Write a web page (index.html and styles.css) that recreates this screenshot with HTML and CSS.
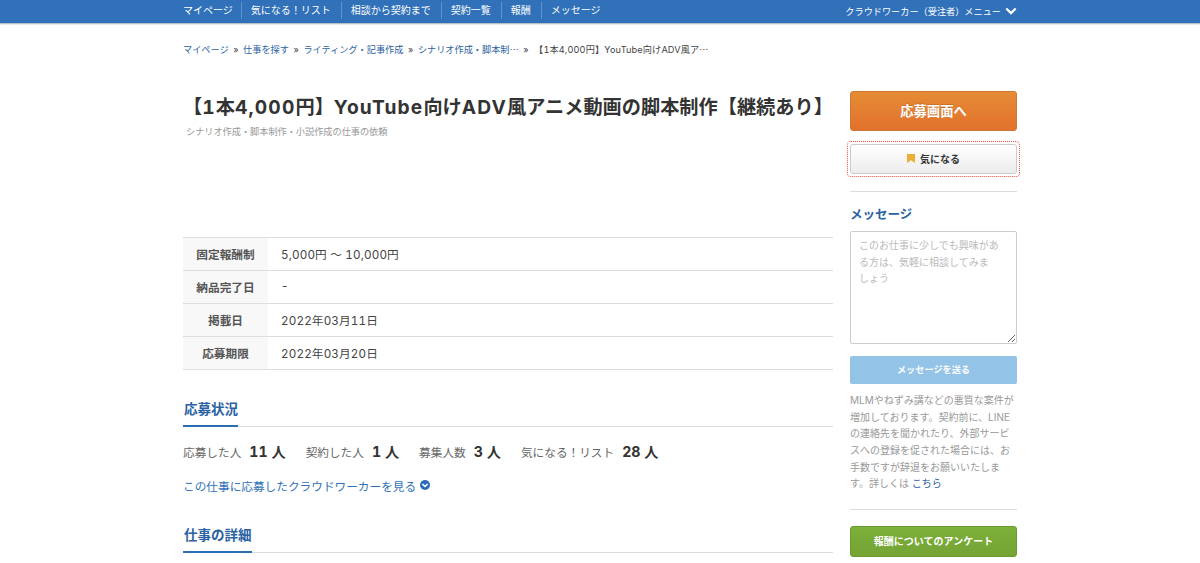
FILE: index.html
```html
<!DOCTYPE html>
<html lang="ja">
<head>
  <meta charset="UTF-8">
  <title>【1本4,000円】YouTube向けADV風アニメ動画の脚本制作【継続あり】</title>
  <meta name="viewport" content="width=device-width, initial-scale=1">
  <link rel="stylesheet" href="styles.css">
</head>
<body>
  <header class="header">
    <div class="container header-inner">
      <ul class="nav">
        <li><a href="#">マイページ</a></li>
        <li><a href="#">気になる！リスト</a></li>
        <li><a href="#">相談から契約まで</a></li>
        <li><a href="#">契約一覧</a></li>
        <li><a href="#">報酬</a></li>
        <li><a href="#">メッセージ</a></li>
      </ul>
      <a href="#" class="user-menu">クラウドワーカー（受注者）メニュー
        <svg class="chevron" viewBox="0 0 12 8"><path d="M1.3 1.5 6 6.1 10.7 1.5"/></svg>
      </a>
    </div>
  </header>

  <div class="container">
    <div class="breadcrumb">
      <a href="#">マイページ</a><span class="sep">»</span><a href="#">仕事を探す</a><span class="sep">»</span><a href="#">ライティング・記事作成</a><span class="sep">»</span><a href="#">シナリオ作成・脚本制⋯</a><span class="sep">»</span><span class="current">【1本4,000円】YouTube向けADV風ア⋯</span>
    </div>

    <div class="columns">
      <main class="main">
        <div class="title-area">
          <h1>【<span class="en">1</span>本<span class="en">4,000</span>円】<span class="en">YouTube</span>向け<span class="en">ADV</span>風アニメ動画の脚本制作【継続あり】</h1>
          <p class="subtitle">シナリオ作成・脚本制作・小説作成の仕事の依頼</p>
        </div>

        <table class="summary">
          <tr><th>固定報酬制</th><td>5,000円 〜 10,000円</td></tr>
          <tr><th>納品完了日</th><td>-</td></tr>
          <tr><th>掲載日</th><td>2022年03月11日</td></tr>
          <tr><th>応募期限</th><td>2022年03月20日</td></tr>
        </table>

        <section>
          <div class="heading"><h2>応募状況</h2></div>
          <ul class="status">
            <li>応募した人<strong>11 人</strong></li>
            <li>契約した人<strong>1 人</strong></li>
            <li>募集人数<strong>3 人</strong></li>
            <li>気になる！リスト<strong>28 人</strong></li>
          </ul>
          <a href="#" class="workers">この仕事に応募したクラウドワーカーを見る
            <svg class="circle-icon" viewBox="0 0 10 10"><circle cx="5" cy="5" r="5"/><path d="M2.4 4 5 6.5 7.6 4"/></svg>
          </a>
        </section>

        <section>
          <div class="heading"><h2>仕事の詳細</h2></div>
        </section>
      </main>

      <aside class="side">
        <a href="#" class="btn btn-apply">応募画面へ</a>
        <div class="keep-wrap">
          <a href="#" class="btn btn-keep">
            <svg class="bookmark" viewBox="0 0 8 9"><path d="M0 0h8v9L4 6.3 0 9z"/></svg>気になる
          </a>
        </div>
        <div class="message">
          <h3>メッセージ</h3>
          <textarea placeholder="このお仕事に少しでも興味がある方は、気軽に相談してみましょう"></textarea>
          <a href="#" class="btn btn-send">メッセージを送る</a>
          <p class="note">MLMやねずみ講などの悪質な案件が増加しております。契約前に、LINEの連絡先を聞かれたり、外部サービスへの登録を促された場合には、お手数ですが辞退をお願いいたします。詳しくは <a href="#">こちら</a></p>
        </div>
        <div class="survey">
          <a href="#" class="btn btn-survey">報酬についてのアンケート</a>
        </div>
      </aside>
    </div>
  </div>
</body>
</html>
```
FILE: styles.css
```css
* {
  box-sizing: border-box;
}
html {
  overflow: hidden;
}
body {
  margin: 0;
  font-family: Inter, "Noto Sans CJK JP", sans-serif;
  font-size: 11.67px;
  font-variant-numeric: tabular-nums;
  color: #444;
  background-color: #fff;
}
h1, h2, h3, p, ul {
  margin: 0;
  padding: 0;
}
ul {
  list-style: none;
}
a {
  color: #2b62a3;
  text-decoration: none;
}
.container {
  width: 834px;
  margin: 0 auto;
}

/* header */
.header {
  height: 24px;
  background-color: #3071b9;
  border-bottom: 1px solid #b9bfc8;
  box-shadow: 0 1px 1px rgba(0,0,0,.08);
}
.header-inner {
  display: flex;
  justify-content: space-between;
}
.nav {
  display: flex;
  padding-top: 2px;
}
.nav li {
  height: 17px;
  line-height: 17px;
  padding: 0 10px 0 9px;
  font-size: 10px;
  border-left: 1px solid #5c93cd;
}
.nav li:first-child {
  padding-left: 0;
  padding-right: 8px;
  border-left: none;
}
.nav a, .user-menu {
  color: #fff;
}
.user-menu {
  display: flex;
  align-items: center;
  gap: 4px;
  height: 21px;
  font-size: 9.17px;
}
.chevron {
  width: 12px;
  height: 8px;
  fill: none;
  stroke: #fff;
  stroke-width: 2.2;
}

/* breadcrumb */
.breadcrumb {
  display: flex;
  height: 67px;
  padding-top: 17px;
  line-height: 17px;
  font-size: 9.17px;
  white-space: nowrap;
}
.sep {
  width: 14.5px;
  text-align: center;
}
.current {
  padding-left: 1px;
  letter-spacing: .14px;
}

.columns {
  display: flex;
  justify-content: space-between;
}
.main {
  width: 650px;
}

/* title */
.title-area {
  height: 146px;
}
h1 {
  font-size: 19.2px;
  line-height: 32px;
  color: #333;
  white-space: nowrap;
}
h1 .en {
  letter-spacing: .06em;
}
.subtitle {
  padding-left: 3px;
  font-size: 9.17px;
  line-height: 17px;
  color: #999;
}

/* summary table */
.summary {
  width: 100%;
  height: 133px;
  border-collapse: collapse;
}
.summary th, .summary td {
  padding: 0 0 2px;
  border-top: 1px solid #ddd;
  border-bottom: 1px solid #ddd;
}
.summary th {
  width: 85px;
  color: #555;
  background-color: #f8f8f8;
}
.summary td {
  padding-left: 13px;
  letter-spacing: .15px;
}

/* sections */
.heading {
  height: 29px;
  border-bottom: 1px solid #ddd;
}
section {
  padding-top: 28px;
}
h2 {
  display: inline-block;
  height: 29px;
  padding-left: 1px;
  line-height: 22px;
  font-size: 13.5px;
  color: #2b62a3;
  border-bottom: 2px solid #2b6cb5;
}
.status {
  display: flex;
  gap: 20px;
  padding-top: 11px;
  line-height: 27px;
  color: #666;
}
.status strong {
  padding-left: 8px;
  font-size: 14.2px;
  color: #333;
}
.workers {
  display: flex;
  align-items: center;
  gap: 4px;
  height: 20px;
  margin: 8px 0 1px;
  color: #2f71b9;
}
.circle-icon {
  width: 10px;
  height: 10px;
  fill: #2b6cb5;
}
.circle-icon path {
  fill: none;
  stroke: #fff;
  stroke-width: 1.6;
}

/* side */
.side {
  width: 167px;
}
.btn {
  display: flex;
  align-items: center;
  justify-content: center;
  padding-bottom: 2px;
  font-weight: bold;
  color: #fff;
  border-radius: 3px;
}
.btn-apply {
  height: 40px;
  font-size: 13.33px;
  background-image: linear-gradient(#e58c35, #e2712d);
  border: 1px solid #cf7835;
  text-shadow: 0 -1px 0 rgba(0,0,0,.15);
}
.keep-wrap {
  margin: 10px -3px 14px;
  padding: 2px;
  border: 1px dotted #ee4f43;
  border-radius: 4px;
}
.btn-keep {
  height: 30px;
  gap: 5px;
  font-size: 10px;
  color: #333;
  background-image: linear-gradient(#fff, #ececec);
  border: 1px solid #ccc;
}
.bookmark {
  width: 8px;
  height: 9px;
  fill: #edae35;
}
.message {
  padding-top: 11px;
  border-top: 1px solid #ddd;
}
h3 {
  font-size: 12.5px;
  line-height: 24px;
  color: #2b62a3;
}
textarea {
  display: block;
  width: 100%;
  height: 113px;
  margin-top: 4px;
  padding: 5px 16px 5px 8px;
  font-family: inherit;
  font-size: 10px;
  line-height: 16.67px;
  line-break: strict;
  border: 1px solid #ccc;
  border-radius: 2px;
}
textarea::placeholder {
  color: #bbb;
}
.btn-send {
  height: 28px;
  margin-top: 12px;
  font-size: 9.17px;
  background-color: #93c3e7;
  border-radius: 2px;
}
.note {
  margin-top: 8px;
  font-size: 10px;
  line-height: 16.67px;
  color: #999;
}
.survey {
  margin-top: 17px;
  padding-top: 16px;
  border-top: 1px solid #ddd;
}
.btn-survey {
  height: 31px;
  font-size: 10px;
  background-image: linear-gradient(#7db03b, #74a334);
  border: 1px solid #699a2c;
}
```
